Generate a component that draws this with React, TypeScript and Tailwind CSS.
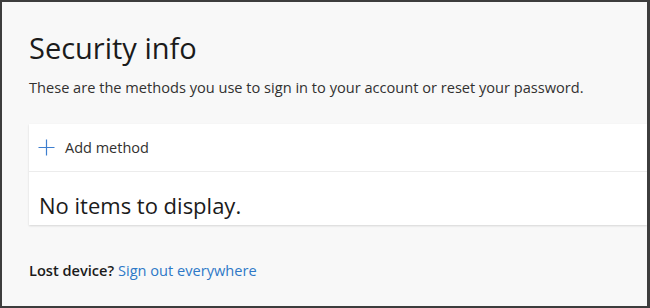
export default function App() {
  return (
    <div
      className="w-[650px] h-[308px] border-2 border-[#3d3d3d] border-r-[3px] bg-[#f8f8f8] overflow-hidden text-[#323130]"
      style={{ fontFamily: '"Open Sans", "Noto Sans", sans-serif' }}
    >
      <div className="pl-[27px] pt-[26px]">
        <h1 className="text-[29px] leading-[40px] text-[#1b1b1b]">Security info</h1>
        <p className="mt-[9px] text-[14.6px] leading-[20px] text-[#323130]">
          These are the methods you use to sign in to your account or reset your password.
        </p>
        <div className="mt-[27px] bg-white shadow-[0_1px_2px_rgba(0,0,0,0.14)]">
          <div className="flex items-center h-[48px] pl-[9px] border-b border-[#ececec]">
            <svg width="17" height="17" viewBox="0 0 17 17" className="mr-[10px]">
              <path d="M8.5 0.5v16M0.5 8.5h16" stroke="#3e7fcf" strokeWidth="1.2" fill="none" />
            </svg>
            <span className="text-[14.5px] text-[#323130]">Add method</span>
          </div>
          <div className="h-[53px] pl-[10px] pt-[18px]">
            <span className="block text-[22px] leading-[30px] text-[#1b1b1b]">No items to display.</span>
          </div>
        </div>
        <p className="mt-[35px] text-[14.6px] leading-[20px]">
          <span className="font-semibold text-[#1b1b1b]">Lost device?</span>{" "}
          <a className="text-[#2e78c7]">Sign out everywhere</a>
        </p>
      </div>
    </div>
  );
}
